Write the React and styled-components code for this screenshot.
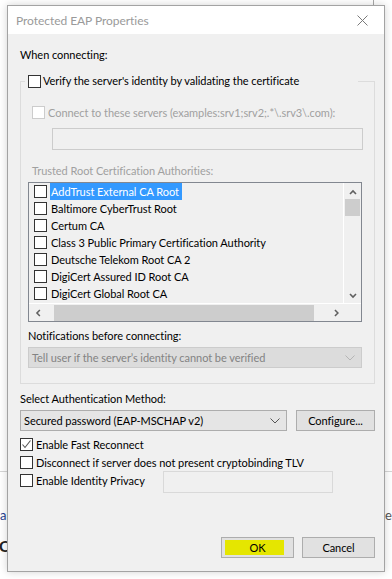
import React from "react";
import styled, { createGlobalStyle, css } from "styled-components";

const GlobalStyle = createGlobalStyle`
  html, body {
    margin: 0;
    padding: 0;
    background: #ffffff;
  }
  body {
    font-family: Lato, "Noto Sans", sans-serif;
    font-size: 11px;
    letter-spacing: -0.05px;
    color: #000;
  }
`;

const certificates = [
  "AddTrust External CA Root",
  "Baltimore CyberTrust Root",
  "Certum CA",
  "Class 3 Public Primary Certification Authority",
  "Deutsche Telekom Root CA 2",
  "DigiCert Assured ID Root CA",
  "DigiCert Global Root CA",
];

function Chevron({ color = "#444" }) {
  return (
    <svg width="10" height="6" viewBox="0 0 10 6">
      <path d="M0.5 0.5 L5 5 L9.5 0.5" fill="none" stroke={color} strokeWidth="1" />
    </svg>
  );
}

function Arrow({ dir }) {
  const d = {
    up: "M1 5 L4 2 L7 5",
    down: "M1 2 L4 5 L7 2",
    left: "M5 1 L2 4 L5 7",
    right: "M2 1 L5 4 L2 7",
  }[dir];
  return (
    <svg width="8" height="8" viewBox="0 0 8 8">
      <path d={d} fill="none" stroke="#606060" strokeWidth="1.6" />
    </svg>
  );
}

function CheckBox({ checked, disabled }) {
  return (
    <Box $disabled={disabled}>
      {checked && (
        <svg width="11" height="11" viewBox="0 0 11 11">
          <path d="M1.5 5.5 L4 8.5 L9.5 1.5" fill="none" stroke="#555" strokeWidth="1.1" />
        </svg>
      )}
    </Box>
  );
}

export default function App() {
  return (
    <Page>
      <GlobalStyle />
      <Backdrop>
        <BackLine />
        <BackText $left={0} $top={507} $color="#1f3f8f">a</BackText>
        <BackText $left={-1} $top={536} $bold $size={16}>C</BackText>
        <BackText $left={385} $top={507} $color="#555">
          e<Blue>l</Blue>
        </BackText>
        <BackEdge />
      </Backdrop>

      <Dialog>
        <TitleBar>
          <Title>Protected EAP Properties</Title>
          <Close>
            <svg width="11" height="11" viewBox="0 0 11 11">
              <path d="M0.5 0.5 L10.5 10.5 M10.5 0.5 L0.5 10.5" stroke="#7a7a7a" strokeWidth="1" />
            </svg>
          </Close>
        </TitleBar>

        <Body>
          <Label>When connecting:</Label>

          <Group>
            <Legend>
              <CheckBox />
              <span>Verify the server's identity by validating the certificate</span>
            </Legend>

            <CheckRow $disabled $indent={11}>
              <CheckBox disabled />
              <span>Connect to these servers (examples:srv1;srv2;.*\.srv3\.com):</span>
            </CheckRow>
            <TextField $disabled $width={311} $ml={31} />

            <Label $disabled $ml={11} $mt={13}>Trusted Root Certification Authorities:</Label>

            <ListBox>
              <ListMain>
                <Items>
                  {certificates.map((name, i) => (
                    <Item key={name}>
                      <CheckBox />
                      <ItemText $selected={i === 0}>{name}</ItemText>
                    </Item>
                  ))}
                </Items>
                <VScroll>
                  <Arrow dir="up" />
                  <VThumb />
                  <Spacer />
                  <Arrow dir="down" />
                </VScroll>
              </ListMain>
              <HScroll>
                <Arrow dir="left" />
                <HThumb />
                <Arrow dir="right" />
                <Corner />
              </HScroll>
            </ListBox>

            <Label $ml={7} $mt={6}>Notifications before connecting:</Label>
            <Select $disabled $width={334} $ml={7}>
              <span>Tell user if the server’s identity cannot be verified</span>
              <Chevron color="#b5b5b5" />
            </Select>
          </Group>

          <Label $mt={7}>Select Authentication Method:</Label>
          <MethodRow>
            <Select $width={267}>
              <span>Secured password (EAP-MSCHAP v2)</span>
              <Chevron color="#555" />
            </Select>
            <Button $width={79}>
              <span>Configure...</span>
            </Button>
          </MethodRow>

          <Options>
            <CheckRow>
              <CheckBox checked />
              <span>Enable Fast Reconnect</span>
            </CheckRow>
            <CheckRow>
              <CheckBox />
              <span>Disconnect if server does not present cryptobinding TLV</span>
            </CheckRow>
            <PrivacyRow>
              <CheckRow>
                <CheckBox />
                <span>Enable Identity Privacy</span>
              </CheckRow>
              <TextField $width={170} $ml={0} />
            </PrivacyRow>
          </Options>

          <Footer>
            <Button $width={73} $highlight>
              <span>OK</span>
            </Button>
            <Button $width={73}>
              <span>Cancel</span>
            </Button>
          </Footer>
        </Body>
      </Dialog>
    </Page>
  );
}

const Page = styled.div`
  position: relative;
  width: 392px;
  height: 579px;
  overflow: hidden;
  padding: 5px 0 0 7px;
  box-sizing: border-box;
`;

const Backdrop = styled.div`
  position: absolute;
  inset: 0;
  z-index: 0;
`;

const BackLine = styled.div`
  position: absolute;
  left: 0;
  right: 0;
  top: 471px;
  height: 1px;
  background: #d6d6d6;
`;

const BackEdge = styled.div`
  position: absolute;
  left: 373px;
  top: 0;
  width: 1px;
  height: 6px;
  background: #a8a8a8;
`;

const BackText = styled.div`
  position: absolute;
  left: ${(p) => p.$left}px;
  top: ${(p) => p.$top}px;
  font-size: ${(p) => p.$size || 13}px;
  font-weight: ${(p) => (p.$bold ? 700 : 400)};
  color: ${(p) => p.$color || "#222"};
`;

const Blue = styled.span`
  color: #2a5bd7;
`;

const Dialog = styled.div`
  position: relative;
  z-index: 1;
  width: 378px;
  height: 567px;
  box-sizing: border-box;
  border: 1px solid #a3a3a3;
  background: #f0f0f0;
  box-shadow: 0 0 8px rgba(0, 0, 0, 0.18);
  display: flex;
  flex-direction: column;
`;

const TitleBar = styled.div`
  height: 28px;
  background: #ffffff;
  display: flex;
  align-items: center;
  justify-content: space-between;
  padding: 0 16px 0 8px;
`;

const Title = styled.div`
  color: #9a9a9a;
  font-size: 12px;
`;

const Close = styled.div`
  display: flex;
  align-items: center;
`;

const Body = styled.div`
  flex: 1;
  display: flex;
  flex-direction: column;
  padding: 13px 9px 13px 12px;
`;

const Label = styled.div`
  line-height: 16px;
  height: 16px;
  white-space: nowrap;
  color: ${(p) => (p.$disabled ? "#a0a0a0" : "#000")};
  margin-left: ${(p) => p.$ml || 0}px;
  margin-top: ${(p) => p.$mt || 0}px;
`;

const Group = styled.fieldset`
  margin: 10px 0 0 0;
  padding: 0 0 15px 0;
  border: 1px solid #dcdcdc;
  display: flex;
  flex-direction: column;
  min-width: 0;
`;

const Legend = styled.legend`
  width: 333px;
  box-sizing: border-box;
  padding: 0 0 0 3px;
  margin-left: 4px;
  display: flex;
  align-items: center;
  gap: 2px;
  line-height: 16px;
  white-space: nowrap;
`;

const Box = styled.span`
  flex: none;
  width: 13px;
  height: 13px;
  box-sizing: border-box;
  border: 1px solid ${(p) => (p.$disabled ? "#cccccc" : "#333333")};
  background: #ffffff;
  display: inline-flex;
  align-items: center;
  justify-content: center;
`;

const CheckRow = styled.div`
  display: flex;
  align-items: center;
  gap: 3px;
  height: 18px;
  white-space: nowrap;
  color: ${(p) => (p.$disabled ? "#a0a0a0" : "#000")};
  margin-left: ${(p) => p.$indent || 0}px;
  margin-top: ${(p) => (p.$indent ? 14 : 0)}px;
`;

const TextField = styled.div`
  width: ${(p) => p.$width}px;
  height: 22px;
  box-sizing: border-box;
  border: 1px solid ${(p) => (p.$disabled ? "#cccccc" : "#d9d9d9")};
  background: #f0f0f0;
  margin-left: ${(p) => p.$ml}px;
  margin-top: ${(p) => (p.$disabled ? 7 : 0)}px;
`;

const ListBox = styled.div`
  margin: 3px 0 0 7px;
  width: 334px;
  height: 140px;
  box-sizing: border-box;
  border: 1px solid #828790;
  background: #f0f0f0;
  display: flex;
  flex-direction: column;
`;

const ListMain = styled.div`
  flex: 1;
  display: flex;
  min-height: 0;
  border-bottom: 1px solid #ffffff;
`;

const Items = styled.div`
  flex: 1;
  padding: 0 0 0 5px;
  border-right: 1px solid #ffffff;
`;

const Item = styled.div`
  display: flex;
  align-items: center;
  gap: 3px;
  height: 17px;
  white-space: nowrap;
`;

const ItemText = styled.span`
  line-height: 17px;
  padding: 0 3px 0 1px;
  ${(p) =>
    p.$selected &&
    css`
      background: #3399ff;
      color: #ffffff;
    `}
`;

const VScroll = styled.div`
  width: 17px;
  display: flex;
  flex-direction: column;
  align-items: center;
  padding: 6px 0 3px;
`;

const VThumb = styled.div`
  width: 15px;
  height: 17px;
  margin-top: 2px;
  background: #cdcdcd;
`;

const Spacer = styled.div`
  flex: 1;
`;

const HScroll = styled.div`
  height: 17px;
  display: flex;
  align-items: center;
  padding-left: 6px;
`;

const HThumb = styled.div`
  width: 266px;
  height: 16px;
  margin: 0 19px 0 11px;
  background: #cdcdcd;
`;

const Corner = styled.div`
  width: 17px;
  margin-left: 4px;
  align-self: stretch;
`;

const Select = styled.div`
  width: ${(p) => p.$width}px;
  height: 21px;
  box-sizing: border-box;
  margin-left: ${(p) => p.$ml || 0}px;
  margin-top: ${(p) => (p.$disabled ? 3 : 0)}px;
  border: 1px solid ${(p) => (p.$disabled ? "#cccccc" : "#adadad")};
  background: ${(p) => (p.$disabled ? "#dcdcdc" : "#e5e5e5")};
  color: ${(p) => (p.$disabled ? "#838383" : "#000")};
  display: flex;
  align-items: center;
  justify-content: space-between;
  padding: 0 6px 0 3px;
  white-space: nowrap;
`;

const MethodRow = styled.div`
  display: flex;
  gap: 9px;
  margin-top: 3px;
`;

const Button = styled.div`
  width: ${(p) => p.$width}px;
  height: 21px;
  box-sizing: border-box;
  border: 1px solid #adadad;
  background: #e1e1e1;
  display: flex;
  align-items: center;
  justify-content: center;
  position: relative;
  ${(p) =>
    p.$highlight &&
    css`
      &::before {
        content: "";
        position: absolute;
        left: 3px;
        top: 2px;
        width: 59px;
        height: 15px;
        background: #e5e600;
      }
    `}

  & > span {
    position: relative;
  }
`;

const Options = styled.div`
  display: flex;
  flex-direction: column;
  margin-top: 4px;
`;

const PrivacyRow = styled.div`
  display: flex;
  align-items: flex-start;
  justify-content: space-between;
  width: 313px;
`;

const Footer = styled.div`
  margin-top: auto;
  display: flex;
  justify-content: flex-end;
  gap: 8px;
`;
